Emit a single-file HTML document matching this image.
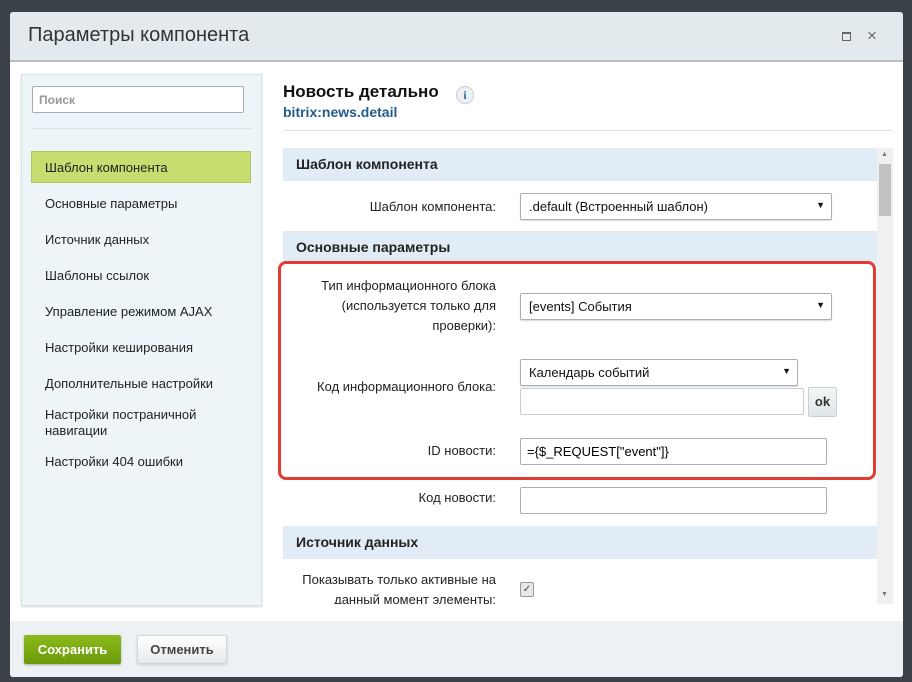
<!DOCTYPE html>
<html><head><meta charset="utf-8"><style>
*{box-sizing:border-box;margin:0;padding:0}
body{width:912px;height:682px;background:#3b4149;font-family:"Liberation Sans",sans-serif;position:relative;overflow:hidden;font-size:13px;color:#000}
.a{position:absolute}
.dlg{left:10px;top:12px;width:893px;height:665px;background:#fff;border-radius:3px;overflow:hidden}
.hdr{left:0;top:0;width:893px;height:50px;background:#e3eaed;border-bottom:2px solid #b9bfc2}
.ftr{left:0;top:609px;width:893px;height:56px;background:#edf1f3}
.lp{left:11px;top:62px;width:241px;height:532px;background:#eef5f9;border:1px solid #dbe3e8;box-shadow:0 1px 2px rgba(0,0,0,.15)}
.mi{position:absolute;left:23px;font-size:13px;color:#222}
.sec{position:absolute;left:0;width:594px;height:33px;background:#e1ecf6;font-weight:bold;font-size:14px;color:#222;padding:8px 13px}
.lbl{position:absolute;right:381px;text-align:right;font-size:13px;color:#222;line-height:20px;white-space:nowrap}
.sel{position:absolute;height:27px;border:1px solid #a9b0b5;border-radius:2px;background:#fff;box-shadow:0 1px 1px rgba(0,0,0,.15);padding:5px 8px;font-size:13px;color:#111}
.sel:after{content:"▼";position:absolute;right:6px;top:6px;font-size:9px}
.inp{position:absolute;height:27px;border:1px solid #c5cbd0;border-radius:2px;background:#fff;padding:5px 6px;font-size:13px}
</style></head><body>
<div class="a dlg">
<div class="a hdr"><div class="a" style="left:18px;top:12px;font-size:20px;color:#333">Параметры компонента</div>
<div class="a" style="left:832px;top:20px;width:9px;height:9px;border:1.5px solid #666;border-top-width:2.5px"></div>
<div class="a" style="left:857px;top:14px;font-size:17px;color:#666">×</div></div>
<div class="a lp">
<div class="a" style="left:10px;top:11px;width:212px;height:27px;background:#fff;border:1px solid #a6adb3;border-radius:2px;padding:6px 6px;font-size:12px;font-weight:bold;color:#999">Поиск</div>
<div class="a" style="left:10px;top:53px;width:220px;height:1px;background:#dde4e8"></div>
<div class="a" style="left:9px;top:76px;width:220px;height:32px;background:#c8dd70;border:1px solid #b2c660"></div>
<div class="mi" style="top:85px">Шаблон компонента</div>
<div class="mi" style="top:121px">Основные параметры</div>
<div class="mi" style="top:157px">Источник данных</div>
<div class="mi" style="top:193px">Шаблоны ссылок</div>
<div class="mi" style="top:229px">Управление режимом AJAX</div>
<div class="mi" style="top:265px">Настройки кеширования</div>
<div class="mi" style="top:301px">Дополнительные настройки</div>
<div class="mi" style="top:332px;line-height:16px">Настройки постраничной<br>навигации</div>
<div class="mi" style="top:379px">Настройки 404 ошибки</div>
</div>
<div class="a" style="left:273px;top:70px;font-size:17px;font-weight:bold;color:#111">Новость детально</div>
<div class="a" style="left:446px;top:74px;width:18px;height:18px;border-radius:50%;background:#eef0f2;border:1px solid #ccd;color:#2a6fb3;font-size:12px;text-align:center;line-height:16px;font-family:'Liberation Serif',serif;font-weight:bold">i</div>
<div class="a" style="left:273px;top:92px;font-size:14px;font-weight:bold;color:#1f5c8c">bitrix:news.detail</div>
<div class="a" style="left:273px;top:118px;width:610px;height:1px;background:#dde2e5"></div>
<div class="a" style="left:867px;top:136px;width:16px;height:456px;background:#f0f0f0"></div>
<div class="a" style="left:869px;top:152px;width:12px;height:52px;background:#c1c1c1"></div>
<div class="a" style="left:871px;top:139px;font-size:7px;color:#777">▲</div>
<div class="a" style="left:871px;top:579px;font-size:7px;color:#777">▼</div>
<div class="a" style="left:273px;top:136px;width:594px;height:456px;overflow:hidden">
<div class="sec" style="top:0">Шаблон компонента</div>
<div class="lbl" style="top:49px">Шаблон компонента:</div>
<div class="sel" style="left:237px;top:45px;width:312px">.default (Встроенный шаблон)</div>
<div class="sec" style="top:83px">Основные параметры</div>
<div class="lbl" style="top:128px">Тип информационного блока<br>(используется только для<br>проверки):</div>
<div class="sel" style="left:237px;top:145px;width:312px">[events] События</div>
<div class="lbl" style="top:229px">Код информационного блока:</div>
<div class="sel" style="left:237px;top:211px;width:278px">Календарь событий</div>
<div class="inp" style="left:237px;top:240px;width:284px"></div>
<div class="a" style="left:525px;top:239px;width:29px;height:30px;background:linear-gradient(#f4f6f7,#dfe5e8);border:1px solid #c9d0d4;border-radius:2px;font-weight:bold;font-size:13px;text-align:center;line-height:28px;color:#333">ok</div>
<div class="lbl" style="top:293px">ID новости:</div>
<div class="inp" style="left:237px;top:290px;width:307px;border-color:#a9b0b5">={$_REQUEST["event"]}</div>
<div class="lbl" style="top:340px">Код новости:</div>
<div class="inp" style="left:237px;top:339px;width:307px;border-color:#a9b0b5"></div>
<div class="sec" style="top:378px">Источник данных</div>
<div class="lbl" style="top:422px">Показывать только активные на<br>данный момент элементы:</div>
<div class="a" style="left:237px;top:434px;width:14px;height:15px;border:1px solid #999;border-radius:2px;background:#e5e8ea;font-size:10px;text-align:center;line-height:13px;color:#444">✓</div>
</div>
<div class="a" style="left:268px;top:249px;width:598px;height:219px;border:3px solid #e03c31;border-radius:8px"></div>
<div class="a ftr">
<div class="a" style="left:14px;top:14px;width:97px;height:29px;background:linear-gradient(#8cba1c,#6a9a0a);border-radius:2px;box-shadow:0 1px 2px rgba(0,0,0,.3);color:#fff;font-weight:bold;font-size:13px;text-align:center;line-height:29px">Сохранить</div>
<div class="a" style="left:127px;top:14px;width:90px;height:29px;background:linear-gradient(#fff,#e5eaec);border:1px solid #cfd5d8;border-radius:2px;box-shadow:0 1px 2px rgba(0,0,0,.15);color:#444;font-weight:bold;font-size:13px;text-align:center;line-height:27px">Отменить</div>
</div>
</div>
</body></html>
